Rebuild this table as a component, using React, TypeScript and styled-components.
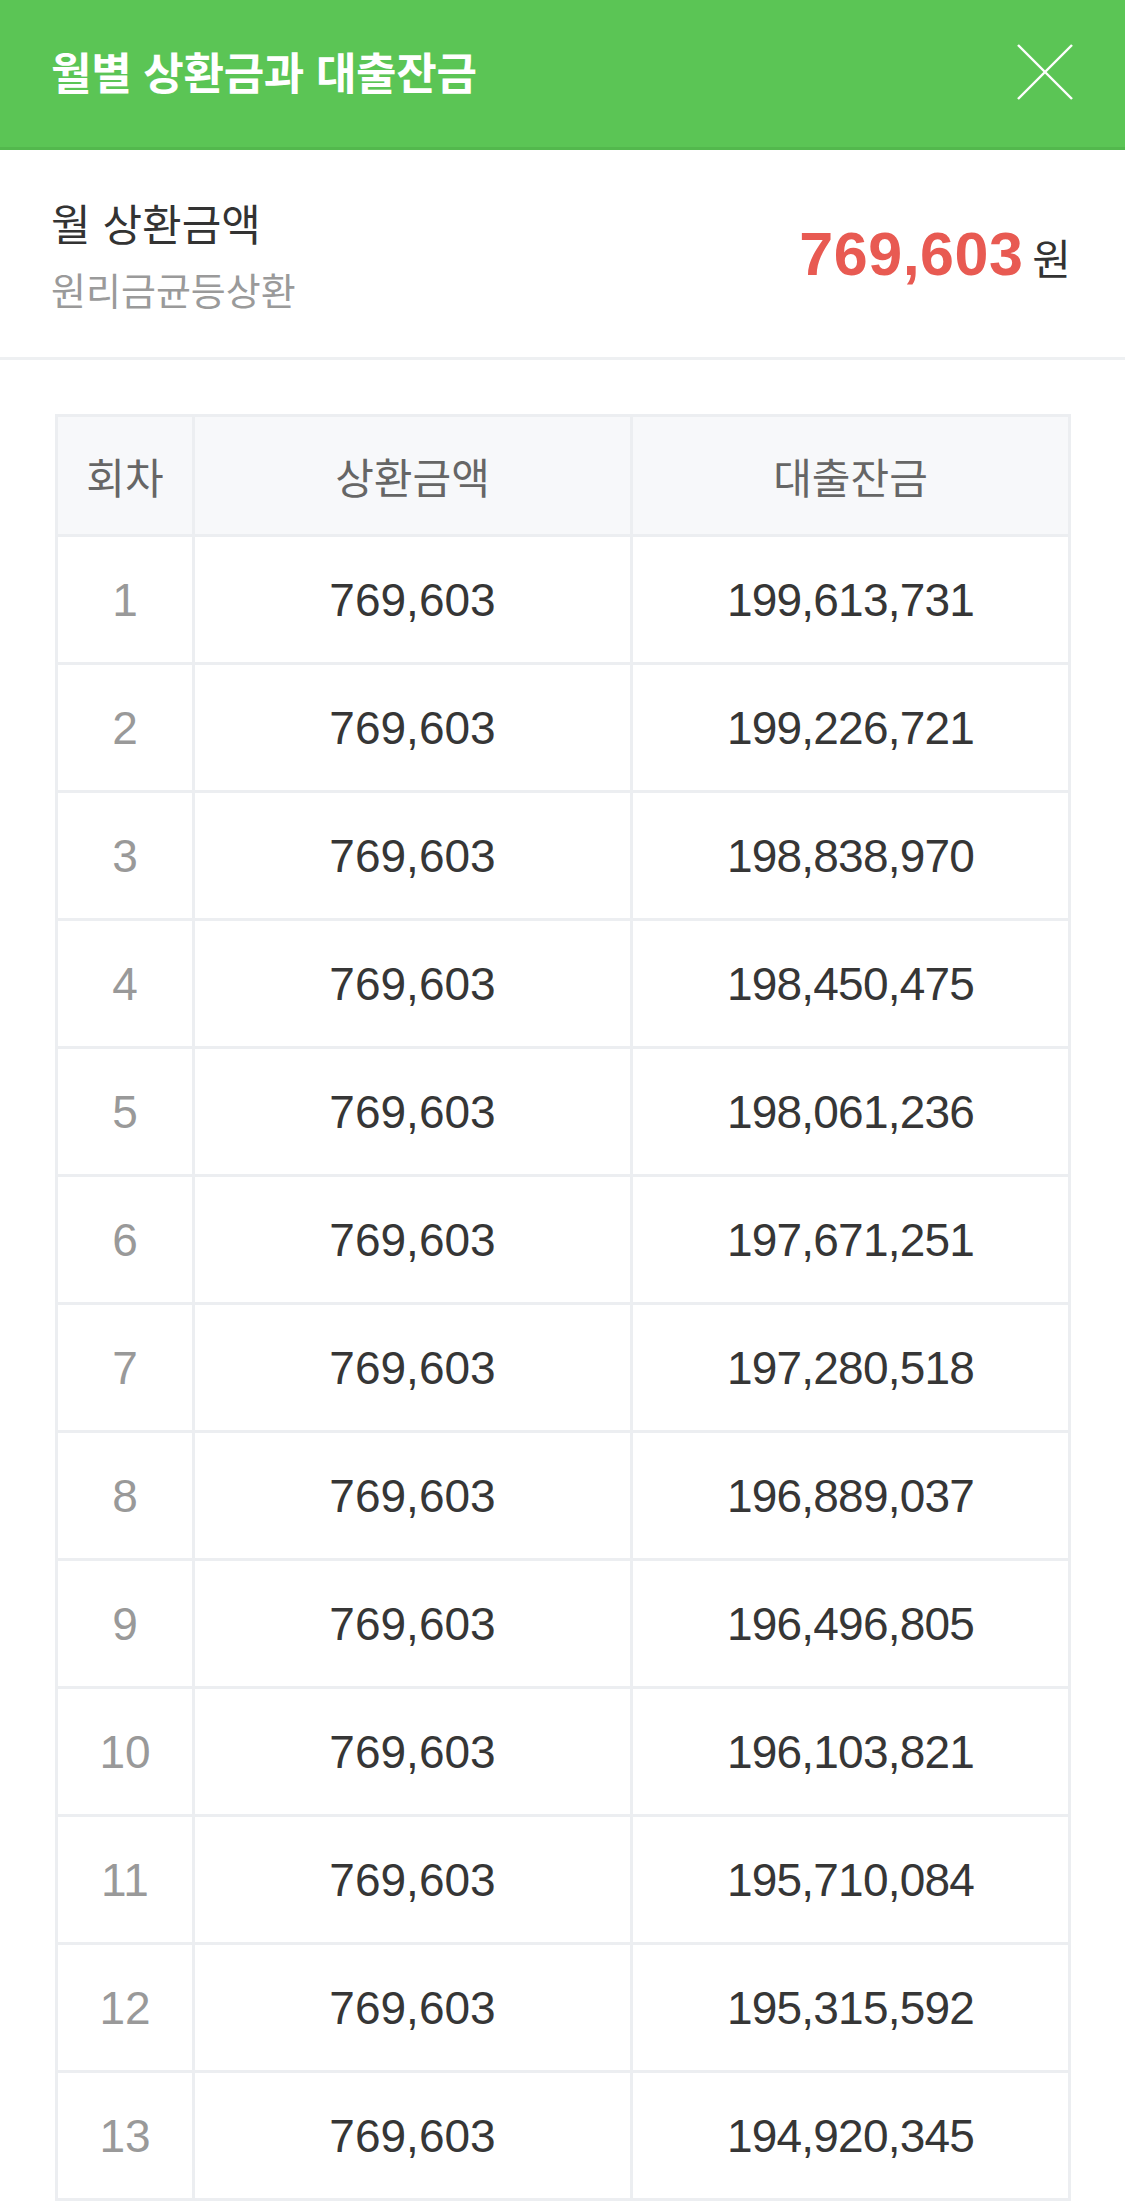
import React from "react";
import styled, { createGlobalStyle } from "styled-components";

const GlobalStyle = createGlobalStyle`
  html, body {
    margin: 0;
    padding: 0;
    background: #ffffff;
  }
  body {
    font-family: "Liberation Sans", "Noto Sans CJK KR", sans-serif;
    -webkit-font-smoothing: antialiased;
  }
  * { box-sizing: border-box; }
`;

const Page = styled.div`
  width: 1125px;
  background: #ffffff;
`;

const TopBar = styled.header`
  height: 150px;
  background: #5bc555;
  border-bottom: 3px solid #53b84d;
  display: flex;
  align-items: center;
  justify-content: space-between;
  padding: 4px 54px 0 51px;
`;

const TopTitle = styled.h1`
  margin: 0;
  font-size: 44px;
  font-weight: 700;
  color: #ffffff;
  letter-spacing: -0.3px;
  line-height: 1.2;
`;

const CloseButton = styled.button`
  width: 56px;
  height: 56px;
  border: 0;
  padding: 0;
  background: transparent;
  display: flex;
  align-items: center;
  justify-content: center;
  margin: -8px -2px 0 0;
  cursor: pointer;
`;

const Summary = styled.section`
  height: 210px;
  border-bottom: 3px solid #eef0f2;
  display: flex;
  align-items: center;
  justify-content: space-between;
  padding: 0 54px 0 51px;
`;

const SummaryLabels = styled.div`
  display: flex;
  flex-direction: column;
  margin-top: 8px;
`;

const SummaryTitle = styled.div`
  font-size: 43px;
  line-height: 50px;
  color: #333333;
  margin-bottom: 18px;
`;

const SummarySub = styled.div`
  font-size: 38px;
  line-height: 46px;
  color: #9a9a9a;
`;

const AmountWrap = styled.div`
  display: flex;
  align-items: baseline;
  gap: 9px;
`;

const Amount = styled.span`
  font-size: 61px;
  font-weight: 700;
  color: #e85a52;
  letter-spacing: 0.5px;
`;

const Unit = styled.span`
  font-size: 42px;
  color: #333333;
`;

const TableWrap = styled.div`
  padding: 54px 54px 0 55px;
`;

const Grid = styled.div`
  display: grid;
  grid-template-columns: 134px 1fr 1fr;
  gap: 3px;
  padding: 3px;
  background: #eceef1;
  width: 1016px;
`;

const HeadCell = styled.div`
  height: 117px;
  background: #f7f8fa;
  display: flex;
  align-items: center;
  justify-content: center;
  font-size: 42px;
  color: #666666;
`;

const Cell = styled.div<{ $muted?: boolean; $tight?: boolean }>`
  height: 125px;
  background: #ffffff;
  display: flex;
  align-items: center;
  justify-content: center;
  font-size: 46px;
  letter-spacing: ${(p) => (p.$tight ? "-0.8px" : "0")};
  color: ${(p) => (p.$muted ? "#999999" : "#363636")};
`;

const rows: [number, string, string][] = [
  [1, "769,603", "199,613,731"],
  [2, "769,603", "199,226,721"],
  [3, "769,603", "198,838,970"],
  [4, "769,603", "198,450,475"],
  [5, "769,603", "198,061,236"],
  [6, "769,603", "197,671,251"],
  [7, "769,603", "197,280,518"],
  [8, "769,603", "196,889,037"],
  [9, "769,603", "196,496,805"],
  [10, "769,603", "196,103,821"],
  [11, "769,603", "195,710,084"],
  [12, "769,603", "195,315,592"],
  [13, "769,603", "194,920,345"],
];

const CloseIcon = () => (
  <svg width="56" height="56" viewBox="0 0 56 56" fill="none">
    <line x1="1" y1="1" x2="55" y2="55" stroke="#ffffff" strokeWidth="2.4" />
    <line x1="55" y1="1" x2="1" y2="55" stroke="#ffffff" strokeWidth="2.4" />
  </svg>
);

export default function App() {
  return (
    <Page>
      <GlobalStyle />
      <TopBar>
        <TopTitle>월별 상환금과 대출잔금</TopTitle>
        <CloseButton aria-label="닫기">
          <CloseIcon />
        </CloseButton>
      </TopBar>
      <Summary>
        <SummaryLabels>
          <SummaryTitle>월 상환금액</SummaryTitle>
          <SummarySub>원리금균등상환</SummarySub>
        </SummaryLabels>
        <AmountWrap>
          <Amount>769,603</Amount>
          <Unit>원</Unit>
        </AmountWrap>
      </Summary>
      <TableWrap>
        <Grid>
          <HeadCell>회차</HeadCell>
          <HeadCell>상환금액</HeadCell>
          <HeadCell>대출잔금</HeadCell>
          {rows.map(([n, pay, bal]) => (
            <React.Fragment key={n}>
              <Cell $muted>{n}</Cell>
              <Cell>{pay}</Cell>
              <Cell $tight>{bal}</Cell>
            </React.Fragment>
          ))}
        </Grid>
      </TableWrap>
    </Page>
  );
}
